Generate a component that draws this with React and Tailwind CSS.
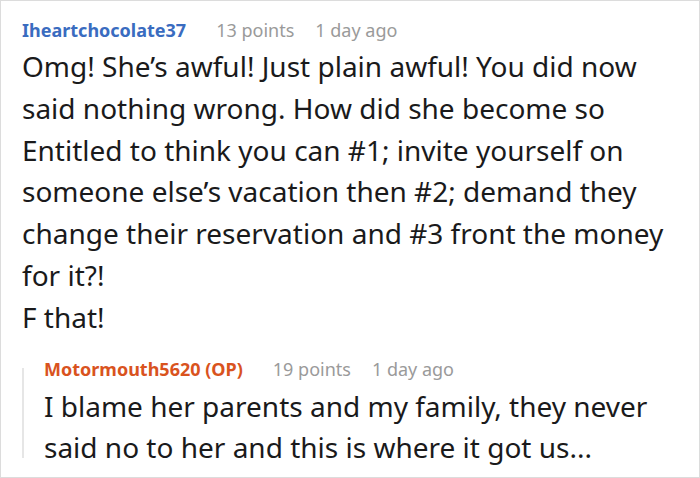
import React from 'react';

const comment = {
    user: 'Iheartchocolate37',
    points: '13 points',
    time: '1 day ago',
    lines: [
        'Omg! She’s awful! Just plain awful! You did now',
        'said nothing wrong. How did she become so',
        'Entitled to think you can #1; invite yourself on',
        'someone else’s vacation then #2; demand they',
        'change their reservation and #3 front the money',
        'for it?!',
        'F that!',
    ],
};

const reply = {
    user: 'Motormouth5620 (OP)',
    points: '19 points',
    time: '1 day ago',
    lines: [
        'I blame her parents and my family, they never',
        'said no to her and this is where it got us...',
    ],
};

function Meta({ user, points, time, color }) {
    return (
        <div className="flex items-center h-[24px] text-[18px] leading-[24px]">
            <span className={`font-bold ${color}`}>{user}</span>
            <span className="ml-[30px] text-[#9a9a9a]">{points}</span>
            <span className="ml-[21px] text-[#9a9a9a]">{time}</span>
        </div>
    );
}

export default function App() {
    return (
        <div
            className="w-[700px] h-[478px] overflow-hidden bg-white border border-[#dcdcdc] pl-[21px] pt-[17px]"
            style={{ fontFamily: '"Noto Sans", "Open Sans", sans-serif' }}
        >
            {/* Parent comment */}
            <Meta {...comment} color="text-[#3a6cc0]" />
            <div className="mt-[4px] text-[28px] leading-[41.8px] text-[#1a1a1b]">
                {comment.lines.map((l, i) => (
                    <div key={i} className="whitespace-nowrap">{l}</div>
                ))}
            </div>

            {/* Reply */}
            <div className="flex mt-[18px]">
                <div className="w-[2px] bg-[#e6e6e6] mt-[11px] mb-[10px]" />
                <div className="pl-[20px]">
                    <Meta {...reply} color="text-[#d9531e]" />
                    <div className="mt-[5px] text-[28px] leading-[41px] text-[#1a1a1b]">
                        {reply.lines.map((l, i) => (
                            <div key={i} className="whitespace-nowrap">{l}</div>
                        ))}
                    </div>
                </div>
            </div>
        </div>
    );
}
